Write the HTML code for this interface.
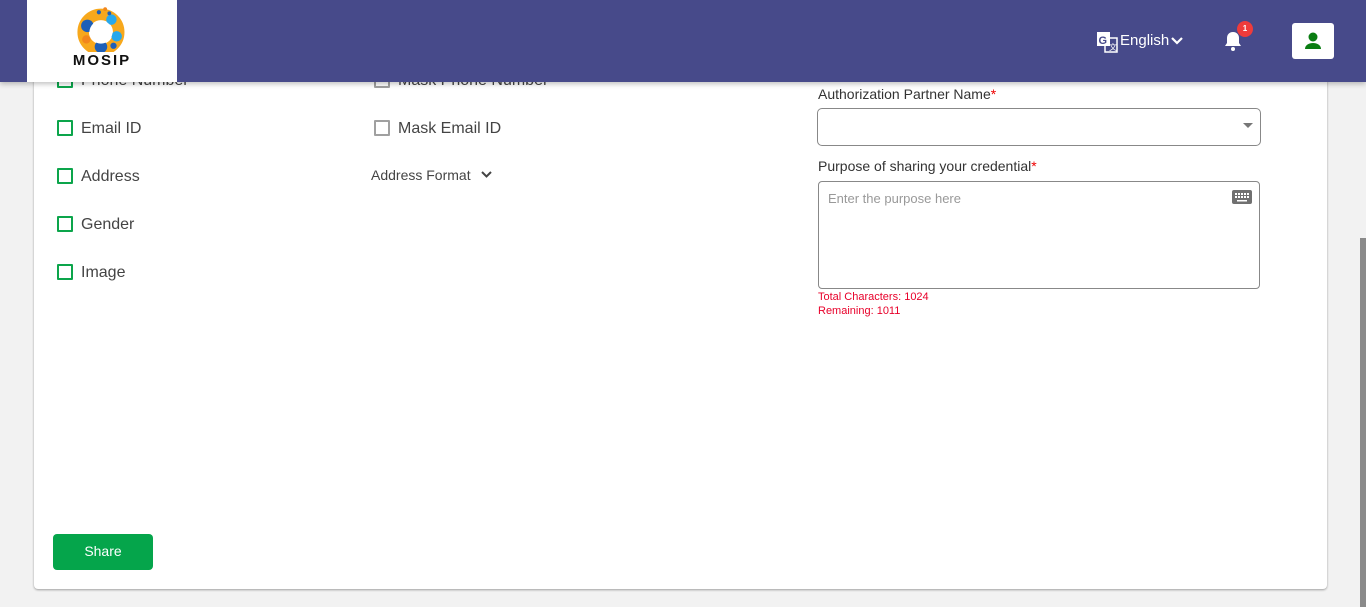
<!DOCTYPE html>
<html><head><meta charset="utf-8">
<style>
*{box-sizing:border-box;margin:0;padding:0}
body{width:1366px;height:607px;overflow:hidden;background:#f2f2f2;font-family:"Liberation Sans",Arial,sans-serif;position:relative}
.card{position:absolute;left:34px;top:40px;width:1293px;height:549px;background:#fff;border-radius:0 0 4px 4px;box-shadow:0 1px 2px rgba(0,0,0,.35)}
.hdr{position:absolute;left:0;top:0;width:1366px;height:82px;background:#474a8a;box-shadow:0 2px 5px rgba(0,0,0,.25);z-index:5}
.logo{position:absolute;left:27px;top:0;width:150px;height:82px;background:#fff}
.logo .t{position:absolute;left:0;width:150px;top:52px;text-align:center;font-weight:bold;font-size:15px;letter-spacing:2px;color:#111}
.cb{position:absolute;width:16px;height:16px;border:2px solid #0ca54b;border-radius:1px}
.cb.g{border-color:#a0a0a0}
.lbl{position:absolute;font-size:16px;color:#444}
.sb{position:absolute;left:1360px;top:238px;width:6px;height:369px;background:#8a8a8a}
</style></head><body>
<div class="card"></div>
<div class="sb"></div>

<div class="cb" style="left:57px;top:72px"></div><div class="lbl" style="left:81px;top:72px">Phone Number</div>
<div class="cb g" style="left:374px;top:72px"></div><div class="lbl" style="left:398px;top:72px">Mask Phone Number</div>

<div class="cb" style="left:57px;top:120px"></div><div class="lbl" style="left:81px;top:120px">Email ID</div>
<div class="cb g" style="left:374px;top:120px"></div><div class="lbl" style="left:398px;top:120px">Mask Email ID</div>
<div class="cb" style="left:57px;top:168px"></div><div class="lbl" style="left:81px;top:168px">Address</div>
<div class="lbl" style="left:371px;top:167px;font-size:14px">Address Format</div>
<svg style="position:absolute;left:480px;top:170px" width="13" height="10" viewBox="0 0 13 10"><path d="M2 2l4.5 4.5L11 2" stroke="#444" stroke-width="2" fill="none"/></svg>
<div class="cb" style="left:57px;top:216px"></div><div class="lbl" style="left:81px;top:216px">Gender</div>
<div class="cb" style="left:57px;top:264px"></div><div class="lbl" style="left:81px;top:264px">Image</div>

<div class="lbl" style="left:818px;top:86px;font-size:14px;color:#333">Authorization Partner Name<span style="color:#e00">*</span></div>
<div style="position:absolute;left:817px;top:108px;width:444px;height:38px;border:1px solid #888;border-radius:5px"></div>
<svg style="position:absolute;left:1243px;top:123px" width="10" height="6"><path d="M0 0h10L5 5z" fill="#777"/></svg>
<div class="lbl" style="left:818px;top:158px;font-size:14px;color:#333">Purpose of sharing your credential<span style="color:#e00">*</span></div>
<div style="position:absolute;left:818px;top:181px;width:442px;height:108px;border:1px solid #888;border-radius:4px"></div>
<div class="lbl" style="left:828px;top:191px;font-size:13px;color:#999">Enter the purpose here</div>
<svg style="position:absolute;left:1232px;top:190px" width="20" height="14" viewBox="0 0 20 14"><rect width="20" height="14" rx="2" fill="#707070"/><g fill="#fff"><rect x="3" y="3" width="2" height="2"/><rect x="6" y="3" width="2" height="2"/><rect x="9" y="3" width="2" height="2"/><rect x="12" y="3" width="2" height="2"/><rect x="15" y="3" width="2" height="2"/><rect x="3" y="6" width="2" height="2"/><rect x="6" y="6" width="2" height="2"/><rect x="9" y="6" width="2" height="2"/><rect x="12" y="6" width="2" height="2"/><rect x="15" y="6" width="2" height="2"/><rect x="5" y="10" width="10" height="1.5"/></g></svg>
<div class="lbl" style="left:818px;top:290px;font-size:11px;color:#e8002a;line-height:14px">Total Characters: 1024<br>Remaining: 1011</div>

<div style="position:absolute;left:53px;top:534px;width:100px;height:36px;background:#05a54b;border-radius:4px;color:#fff;font-size:14px;text-align:center;line-height:35px">Share</div>

<div class="hdr">
 <div class="logo">
  <svg style="position:absolute;left:48px;top:6px" width="54" height="46" viewBox="0 0 50 44">
   <circle cx="24" cy="25" r="17" fill="none" stroke="#f7a81c" stroke-width="11"/>
   <circle cx="11" cy="19" r="6" fill="#1d5fb8"/><circle cx="34" cy="13" r="5" fill="#27a8ec"/>
   <circle cx="24" cy="39" r="6" fill="#1d5fb8"/><circle cx="39" cy="29" r="5" fill="#27a8ec"/>
   <circle cx="10" cy="32" r="4" fill="#f2861b"/><circle cx="36" cy="38" r="3" fill="#1d5fb8"/>
   <circle cx="24" cy="25" r="11" fill="#fff"/>
   <circle cx="22" cy="6" r="2" fill="#1d5fb8"/><circle cx="28" cy="3" r="1.8" fill="#f2861b"/><circle cx="32" cy="7" r="1.8" fill="#1d5fb8"/>
  </svg>
  <div class="t">MOSIP</div>
 </div>
 <svg style="position:absolute;left:1097px;top:31px" width="22" height="22" viewBox="0 0 22 22"><rect x="0" y="1" width="13" height="14" fill="#fff"/><rect x="8" y="7" width="12" height="14" fill="none" stroke="#fff" stroke-width="1.5"/><text x="1.5" y="13" font-size="11" font-weight="bold" fill="#474a8a" font-family="Liberation Sans">G</text><text x="12" y="19" font-size="8" fill="#fff" font-family="Liberation Sans">文</text></svg>
 <div style="position:absolute;left:1120px;top:32px;color:#fff;font-size:15px">English</div>
 <svg style="position:absolute;left:1170px;top:36px" width="14" height="10"><path d="M2 2l5 5 5-5" stroke="#fff" stroke-width="2.2" fill="none"/></svg>
 <svg style="position:absolute;left:1222px;top:30px" width="22" height="22" viewBox="0 0 22 22"><path d="M11 2c-4 0-6 3-6 6v5l-2 3h16l-2-3V8c0-3-2-6-6-6z" fill="#fff"/><circle cx="11" cy="19" r="2" fill="#fff"/></svg>
 <div style="position:absolute;left:1237px;top:21px;width:16px;height:16px;border-radius:50%;background:#ef3b3b;color:#fff;font-size:8px;font-weight:bold;text-align:center;line-height:16px">1</div>
 <div style="position:absolute;left:1292px;top:23px;width:42px;height:36px;background:#fff;border-radius:3px"></div>
 <svg style="position:absolute;left:1303px;top:31px" width="20" height="20" viewBox="0 0 20 20"><circle cx="10" cy="6" r="4.5" fill="#0a7d12"/><path d="M2 18c0-4 4-6 8-6s8 2 8 6z" fill="#0a7d12"/></svg>
</div>
</body></html>
